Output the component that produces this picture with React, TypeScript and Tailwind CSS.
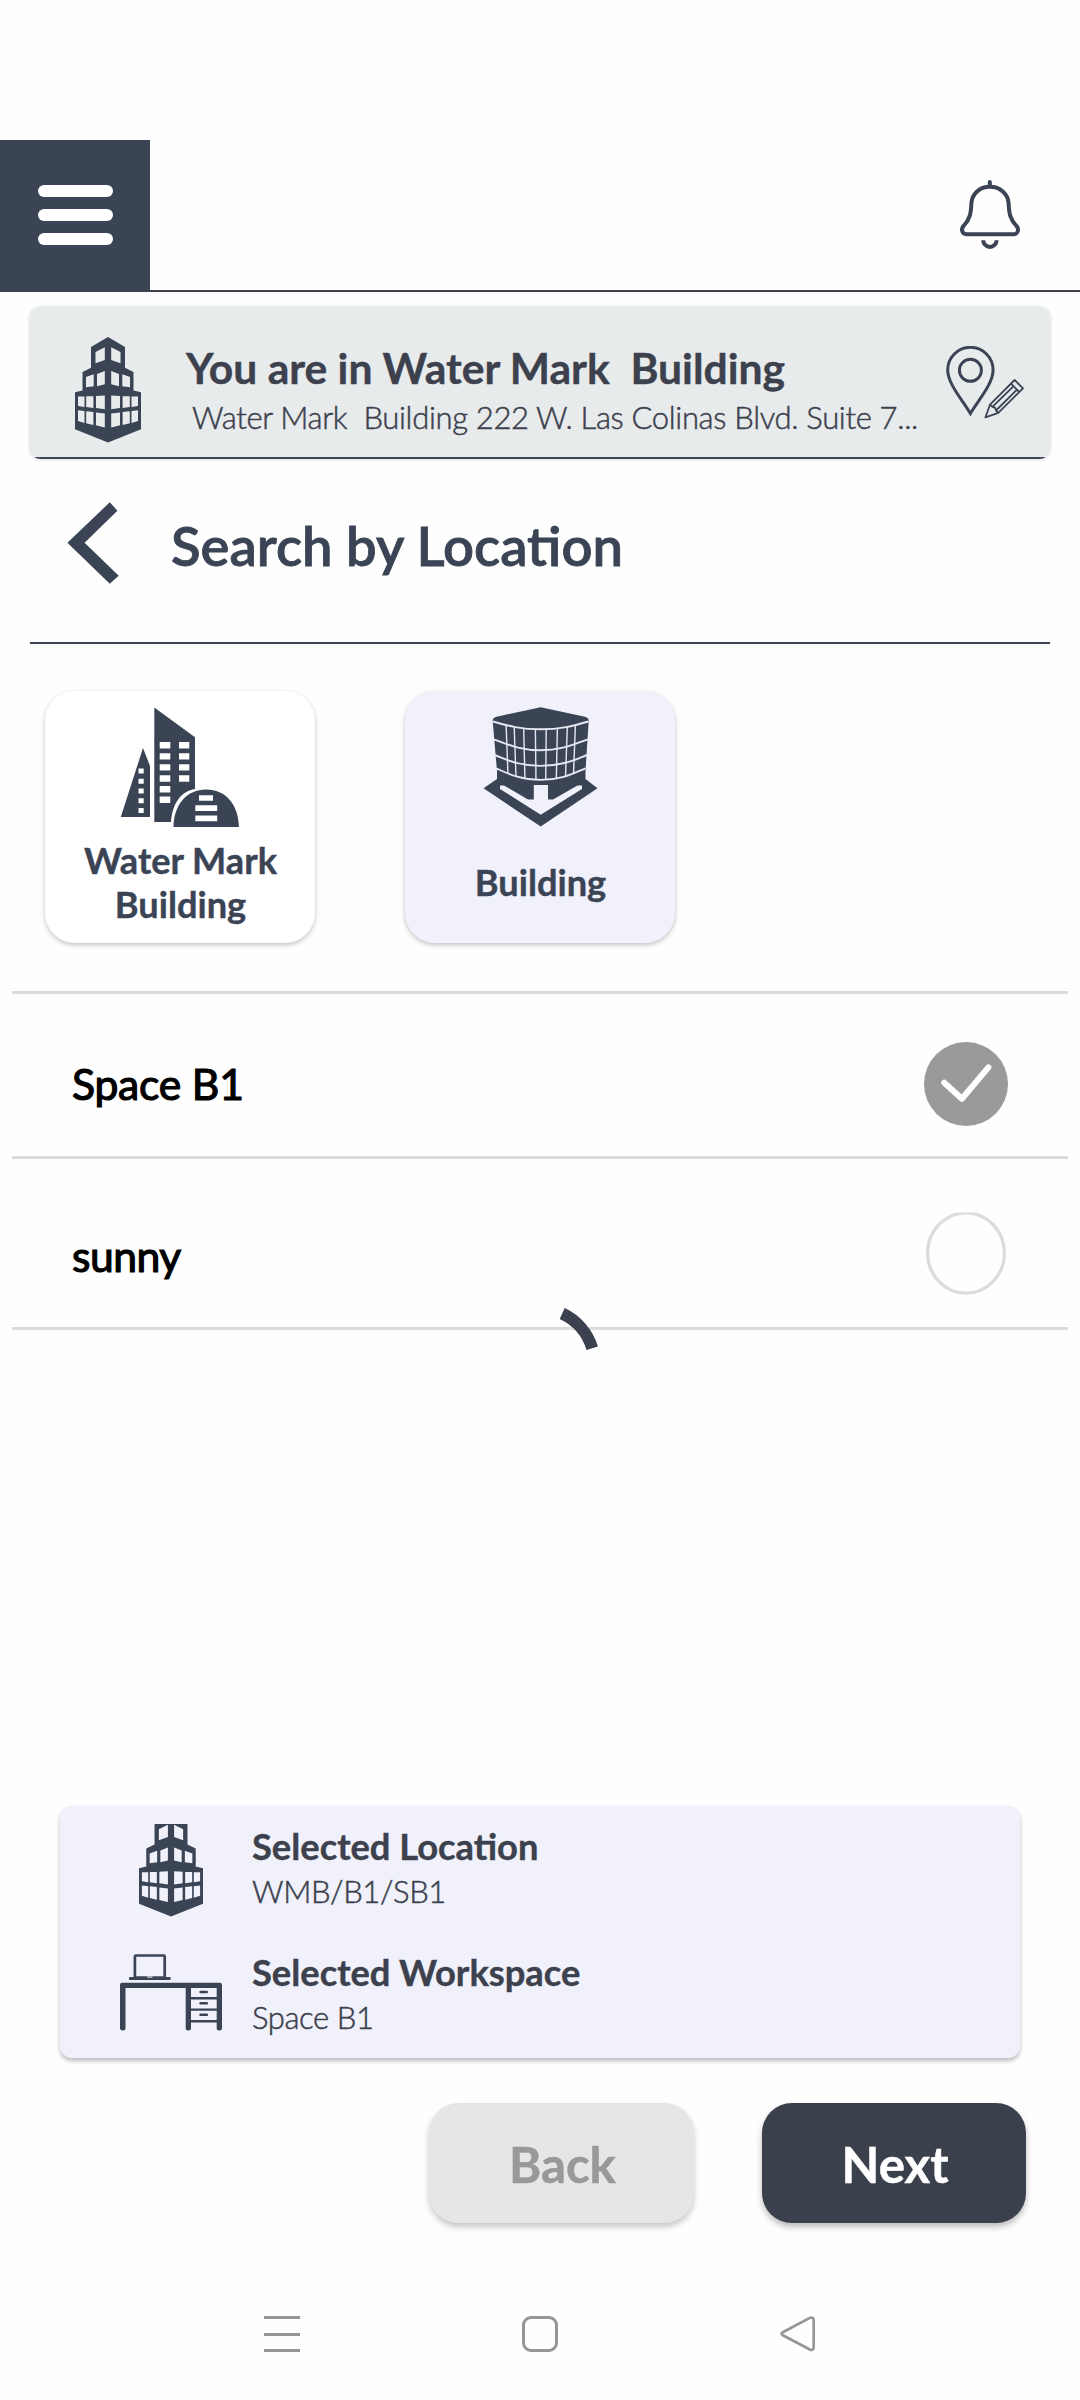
type IconProps = { className?: string };

function Tower({ className, viewBox = "0 0 66 106" }: IconProps & { viewBox?: string }) {
  return (
    <svg className={className} viewBox={viewBox} preserveAspectRatio="none" fill="#3b4455" fillRule="evenodd">
      <path
        d="M33 0L50 10V30.7L58.5 35V53.5L66 55.3V92.3L33 105.6L0 92.3V55.3L7.5 53.5V35L16 30.7V10Z
        M36.2 10.3L45.5 15V26.3L36.2 23Z M29.8 10.3L20.5 15V26.3L29.8 23Z
        M36.2 34L44 37V49.2L36.2 47.3Z M29.8 34L22 37V49.2L29.8 47.3Z
        M47.3 37.3L55 40V50.3L47.3 49.3Z M18.7 37.3L11 40V50.3L18.7 49.3Z
        M36.2 58.5L45 59V71L36.2 72.3Z M29.8 58.5L21 59V71L29.8 72.3Z
        M47.6 59.2H54.8V70L47.6 71Z M18.4 59.2H11.2V70L18.4 71Z
        M56.5 59.5H63V69L56.5 70Z M9.5 59.5H3V69L9.5 70Z
        M36.2 76.5L45 75.5V88.3L36.2 90.5Z M29.8 76.5L21 75.5V88.3L29.8 90.5Z
        M47.6 75L54.8 74.2V86.3L47.6 88Z M18.4 75L11.2 74.2V86.3L18.4 88Z
        M56.5 74L63 73.2V84L56.5 86Z M9.5 74L3 73.2V84L9.5 86Z"
      />
    </svg>
  );
}

function Bell({ className }: IconProps) {
  return (
    <svg className={className} viewBox="0 0 60 70" fill="none" stroke="#3b4455" strokeWidth="4">
      <path d="M29.8 6.8C19 6.8 12 14.5 11.4 23C11 33 10 39 3.9 45.5C.2 49.2 2.5 54.2 6.2 54.2H54C57.6 54.2 59.8 49.2 56.1 45.5C50 39 49 33 48.6 23C48 14.5 40.6 6.8 29.8 6.8Z" />
      <path d="M29.8 6V2" strokeLinecap="round" />
      <path d="M23.2 60.2A6.7 6.7 0 0 0 36.6 60.2" />
    </svg>
  );
}

function EditPin({ className }: IconProps) {
  return (
    <svg className={className} viewBox="0 0 79 74" fill="none" stroke="#3b4455">
      <path strokeWidth="3" d="M24.4 67.5C17 54.5 1.7 38 1.7 24A22.7 22.7 0 0 1 47.1 24C47.1 38 32 54.5 24.4 67.5Z" />
      <circle cx="24.4" cy="24.3" r="11" strokeWidth="3" />
      <g strokeWidth="1.8" strokeLinejoin="round">
        <path d="M39.4 71.4L44 58.7L68.6 34L77 42.3L52.3 66.8Z" />
        <path d="M44 58.7L46.4 60.9L49 61.7L50 64.5L52.3 66.8M65 37.6L73.3 46M46.4 60.9L67.6 40.2M50 64.5L71 43.6" />
      </g>
    </svg>
  );
}

function CityIcon({ className }: IconProps) {
  return (
    <svg className={className} viewBox="0 0 120 120" fill="#3b4455" fillRule="evenodd">
      <path
        d="M34.3 .5L75 30.3V82C62 84 52.5 95 51 115H34.3Z
        M39.7 35h10.6v6.4h-10.6Z M39.7 46.2h10.6v6.4h-10.6Z M39.7 57.2h10.6v6.4h-10.6Z M39.7 68.3h10.6v6.4h-10.6Z M39.7 79h10.6v6.4h-10.6Z M39.7 89.5h10.6v6.4h-10.6Z
        M59 35h10.3v6.4H59Z M59 46.2h10.3v6.4H59Z M59 57.2h10.3v6.4H59Z M59 68.3h10.3v6.4H59Z"
      />
      <path
        d="M23 41L30 59V110H.8Z
        M18.5 61.5h5.2v5h-5.2Z M18.5 71.8h5.2v5h-5.2Z M18.5 81.5h5.2v5h-5.2Z M18.5 91.3h5.2v5h-5.2Z M18.5 101h5.2v5h-5.2Z"
      />
      <path
        d="M53.5 120C54 97 67 82.4 86.2 82.4S118.5 97 119 120Z
        M79 88.3h14v5.5H79Z M75.3 98.3H97.2v5.7H75.3Z M75.3 108.5H97.2v5.7H75.3Z"
      />
    </svg>
  );
}

function HouseBlockIcon({ className }: IconProps) {
  return (
    <svg className={className} viewBox="0 0 115 120" fill="#3b4455">
      <defs>
        <clipPath id="facade">
          <path d="M8 13.5C25 19 40 22.3 57.7 22.3S90 19 107 13.5L102 61.3C92 66 78 72.7 57.7 72.7S23 66 13 61.3Z" />
        </clipPath>
      </defs>
      <path d="M57.7 .3L102 9.700Q106 11 105.700 14L102.500 64V72L114.500 81.300L57.700 119.500L.5 81.300L14 72V64L9.700 14Q9.500 11 13.500 9.700Z" />
      <g fill="none" stroke="#e6e8f2" strokeWidth="1.400">
        <path
          strokeWidth="1.900"
          d="M10 14.500C25 19 38 22.300 57.700 22.300S90 19 105.500 14.500M10.500 32.300C22 36 35 43.300 57.700 43.300S93 36 105 32.300M11.500 48C22 52 35 58.900 57.700 58.900S93 52 104 48M13 61.300C23 65.500 36 72.900 57.700 72.900S92 65.500 102.500 61.300"
        />
        <path
          clipPath="url(#facade)"
          d="M23 15L25 68M31 15L33 70M40.500 15L42 73M52.300 15L53 75M63.300 15L62.700 75M74.500 15L73.300 73M84.500 15L82.500 70M92.500 15L90.500 68"
        />
      </g>
      <path fill="#f0f1fa" d="M17 78.500H21L45 92.500H50.800V78H65V92.500H70L94.500 78.500H99V82L57.700 107.800L17 82Z" />
    </svg>
  );
}

function DeskIcon({ className }: IconProps) {
  return (
    <svg className={className} viewBox="0 0 102 77" fill="#3b4455">
      <rect x="14.900" y="1.500" width="29.800" height="22" rx="1" fill="none" stroke="#3b4455" strokeWidth="2.700" />
      <rect x="9" y="23" width="41.700" height="3" rx="1" />
      <rect x="27" y="22.300" width="5.500" height="1.500" fill="#c5c8d3" />
      <path d="M2 28.700H100Q102 28.700 102 31V74Q102 76.500 99.300 76.500T96.700 74V34H71V74Q71 76.500 68.300 76.500T65.700 74V34H5.500V74Q5.500 76.500 2.800 76.500T0 74V31Q0 28.700 2 28.700Z" />
      <path d="M70 43h28v2.400H70Z M70 54.400h28v2.400H70Z M70 66h28v2.400H70Z" />
      <rect x="79.300" y="36.700" width="8.700" height="2.500" rx="1.200" />
      <rect x="79.300" y="48.100" width="8.700" height="2.500" rx="1.200" />
      <rect x="79.300" y="59.600" width="8.700" height="2.500" rx="1.200" />
    </svg>
  );
}

function Header() {
  return (
    <header className="flex h-[152px] items-start justify-between border-b-2 border-[#3c414d]">
      <button className="flex h-[150px] w-[150px] flex-col items-center justify-center gap-3 bg-[#3b4455]">
        <span className="h-3 w-[75px] rounded-full bg-white" />
        <span className="h-3 w-[75px] rounded-full bg-white" />
        <span className="h-3 w-[75px] rounded-full bg-white" />
      </button>
      <Bell className="mt-10 mr-[60px] h-[70px] w-[60px]" />
    </header>
  );
}

function LocationBanner() {
  return (
    <section className="mx-[29px] mt-[14px] rounded-xl shadow-[0_1px_3px_rgba(0,0,0,0.12)]">
      <div className="flex h-[153px] flex-col overflow-hidden rounded-xl bg-[#e8ebec]">
        <div className="flex h-[151px] items-start">
          <Tower className="mt-[31px] ml-[46px] h-[106px] w-[66px] shrink-0" />
          <div className="ml-[45px] pt-[37px] whitespace-pre text-[#3c414d]">
            <h1 className="text-[42.6px] leading-[50px] font-bold [-webkit-text-stroke:0.4px_#3c414d]">{"You are in Water Mark  Building"}</h1>
            <p className="mt-1 ml-[6px] text-[31px] leading-10 font-light tracking-[-0.33px] [-webkit-text-stroke:0.5px_#3c414d]">
              {"Water Mark  Building 222 W. Las Colinas Blvd. Suite 7..."}
            </p>
          </div>
          <EditPin className="mt-10 mr-[26px] ml-auto h-[74px] w-[79px] shrink-0" />
        </div>
        <div className="h-0.5 bg-[#3b4455]" />
      </div>
    </section>
  );
}

function BuildingCard({ label, active, children }: { label: string; active?: boolean; children: React.ReactNode }) {
  return (
    <button
      className={`flex h-[252px] w-[270px] flex-col items-center rounded-[30px] pt-4 shadow-[0_2px_5px_rgba(0,0,0,0.24)] ${
        active ? "bg-[#f0f1fa]" : "bg-white"
      }`}
    >
      {children}
      <span className="mt-[10px] flex h-[89px] w-[220px] items-center justify-center pl-px text-center text-[36.2px] leading-[44px] font-bold text-[#3b4455] [-webkit-text-stroke:0.4px_#3b4455]">
        {label}
      </span>
    </button>
  );
}

function Summary({ title, value, icon }: { title: string; value: string; icon: React.ReactNode }) {
  return (
    <div className="flex h-[92px] items-start">
      <div className="flex w-[102px] justify-center">{icon}</div>
      <div className="ml-[30px] text-[#3c414d]">
        <p className="text-[36.3px] leading-[46px] font-bold [-webkit-text-stroke:0.4px_#3c414d]">{title}</p>
        <p className="-mt-px text-[31px] leading-[46px] font-light tracking-[-0.4px] [-webkit-text-stroke:0.5px_#3c414d]">{value}</p>
      </div>
    </div>
  );
}

export default function App() {
  return (
    <div className="relative flex h-[2400px] w-[1080px] flex-col overflow-hidden bg-[#fefefe] pt-[140px] font-['Lato',sans-serif]">
      <Header />
      <LocationBanner />

      <section className="mx-[30px] flex h-[185px] items-start border-b-2 border-[#3b4455]">
        <svg className="mt-[43px] ml-[37px] h-[82px] w-[52px]" viewBox="0 0 52 82" fill="#3b4455">
          <path d="M.4 40.700L42.800 .3L50.400 8.700L17.600 40.700L51.700 73.700L42.800 81.700Z" />
        </svg>
        <h2 className="mt-[54px] ml-[52px] text-[54.4px] leading-[64px] font-semibold text-[#3b4455] [-webkit-text-stroke:0.8px_#3b4455]">
          Search by Location
        </h2>
      </section>

      <section className="mt-[47px] ml-[45px] flex gap-[90px]">
        <BuildingCard label="Water Mark Building">
          <CityIcon className="h-[120px] w-[120px]" />
        </BuildingCard>
        <BuildingCard label="Building" active>
          <HouseBlockIcon className="h-[120px] w-[115px]" />
        </BuildingCard>
      </section>

      <ul className="mx-3 mt-12 border-b-[3px] border-[#dcdcdc] text-[42.6px] leading-[52px] font-normal tracking-[-0.2px] text-black [-webkit-text-stroke:1.2px_#000]">
        <li className="flex h-[165px] items-center justify-between border-t-[3px] border-[#dcdcdc] pt-[18px] pr-[60px] pl-[60px]">
          <span>Space B1</span>
          <svg className="h-[84px] w-[84px]" viewBox="0 0 84 84">
            <circle cx="42" cy="42" r="42" fill="#9a9a9a" />
            <path d="M20.200 40.700L37.900 56.800L64.400 25.400" fill="none" stroke="#fff" strokeWidth="6" strokeLinecap="round" strokeLinejoin="round" />
          </svg>
        </li>
        <li className="flex h-[171px] items-center justify-between border-t-[3px] border-[#dcdcdc] pt-[20px] pr-[60px] pl-[60px]">
          <span className="mt-[5px] tracking-[-0.5px]">sunny</span>
          <svg className="h-[84px] w-[84px]" viewBox="0 0 84 84">
            <ellipse cx="42" cy="42" rx="38.400" ry="40.200" fill="none" stroke="#dcdcdc" strokeWidth="3.300" />
            <rect width="84" height="1.500" fill="#fefefe" />
          </svg>
        </li>
      </ul>

      <svg className="absolute top-[1300px] left-[550px] h-[60px] w-[60px]" viewBox="550 1300 60 60" fill="none">
        <path d="M562.200 1313.500A56 56 0 0 1 592.200 1348.200" stroke="#3b414e" strokeWidth="12" />
      </svg>

      <section className="mx-[60px] mt-[476px] flex h-[252px] flex-col gap-[34px] rounded-xl bg-[#f0f1fa] px-[60px] pt-[17px] shadow-[0_3px_4px_rgba(0,0,0,0.26)]">
        <Summary
          title="Selected Location"
          value="WMB/B1/SB1"
          icon={<Tower className="mt-px h-[93px] w-16" viewBox="0 9.500 66 96.500" />}
        />
        <Summary title="Selected Workspace" value="Space B1" icon={<DeskIcon className="mt-[5px] h-[77px] w-[102px]" />} />
      </section>

      <section className="mt-[45px] mr-[54px] flex justify-end gap-[68px] text-[49.100px] font-bold">
        <button className="h-[120px] w-[265px] rounded-[30px] bg-[#e6e6e6] pt-1 pl-0.5 text-[#999] shadow-[0_4px_6px_rgba(0,0,0,0.22)] [-webkit-text-stroke:0.5px_#999]">
          Back
        </button>
        <button className="h-[120px] w-[264px] rounded-[30px] bg-[#3b404d] pt-1 pl-0.5 text-white shadow-[0_4px_6px_rgba(0,0,0,0.26)] [-webkit-text-stroke:0.5px_#fff]">
          Next
        </button>
      </section>

      <nav className="mt-[93px] flex items-center justify-between pr-[264px] pl-[264px]">
        <span className="flex h-9 w-9 flex-col justify-between">
          <span className="h-[3px] bg-[#959595]" />
          <span className="h-[3px] bg-[#959595]" />
          <span className="h-[3px] bg-[#959595]" />
        </span>
        <span className="h-9 w-9 rounded-[9px] border-[3px] border-[#959595]" />
        <svg className="h-9 w-9" viewBox="0 0 36 36" fill="none" stroke="#959595" strokeWidth="2.700" strokeLinejoin="round">
          <path d="M2.800 16.200L29.800 1.900Q33.700 .5 33.700 4.500V31Q33.700 35 29.800 33.500L2.800 19.200Q.5 17.700 2.800 16.200Z" />
        </svg>
      </nav>
    </div>
  );
}
